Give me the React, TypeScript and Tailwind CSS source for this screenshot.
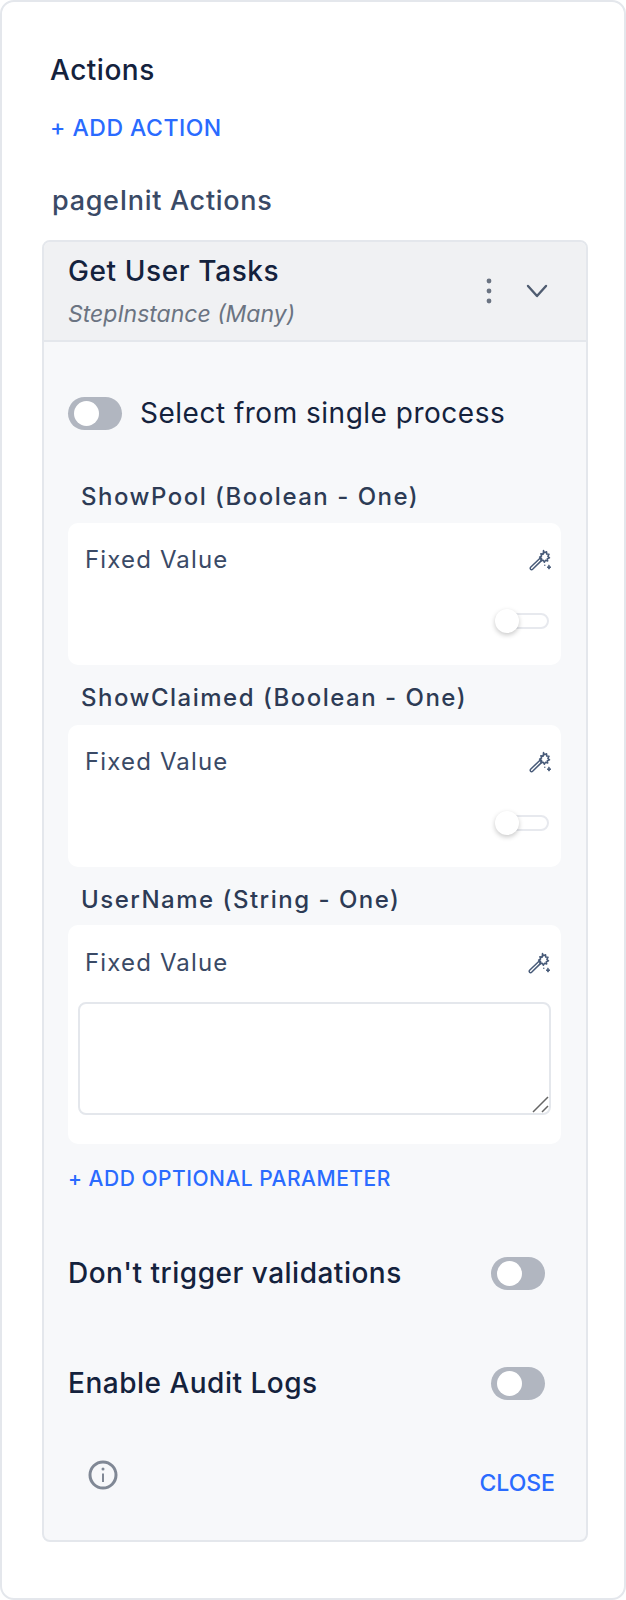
const font = { fontFamily: 'Inter, sans-serif' };

const WandIcon = () => (
  <svg width="24" height="24" viewBox="0 0 24 24" fill="none" stroke="#475a78" strokeWidth="1.5" strokeLinejoin="round" strokeLinecap="round">
    <path d="M2.6 21.2 a1.3 1.3 0 0 1 0-1.9 L12 10.2 l1.9 1.9 L4.6 21.3 a1.4 1.4 0 0 1-2 -.1z" />
    <path d="M15.5 2.5l1 2.2 2.1-1 .1 2.4 2.3.2-1.2 2 1.7 1.5-2.2.9.4 2.3-2.2-.7-1.2 2-1-2.1-2.3.5.6-2.3-2-1.2 2-1.2-.7-2.3 2.3.5z" />
    <path d="M21 17.2l.7 1.3 1.3.7-1.3.7-.7 1.3-.7-1.3-1.3-.7 1.3-.7z" fill="#475a78" strokeWidth="0.8" />
    <circle cx="16.8" cy="17.2" r=".7" fill="#475a78" stroke="none" />
  </svg>
);

const BigToggle = () => (
  <span className="flex h-[33px] w-[54px] shrink-0 items-center rounded-full bg-[#b1b6c0] pl-[6px]">
    <span className="h-[25px] w-[25px] rounded-full bg-white" />
  </span>
);

const SmallToggle = () => (
  <span className="relative block h-[24px] w-[54px]">
    <span className="absolute left-[8px] right-0 top-[4px] h-[16px] rounded-full border-2 border-[#e7e9ee] bg-white" />
    <span className="absolute left-0 top-0 h-[24px] w-[24px] rounded-full bg-white shadow-[0_2px_5px_rgba(0,0,0,0.22)]" />
  </span>
);

const FixedHeader = () => (
  <div className="flex items-center justify-between">
    <span className="text-[24px] leading-[30px] tracking-[1.15px] text-[#3a4a66]">Fixed Value</span>
    <WandIcon />
  </div>
);

const ParamLabel = ({ label }: { label: string }) => (
  <div className="pl-[13px] text-[24px] font-medium leading-[30px] tracking-[1.5px] text-[#2d3b55]">{label}</div>
);

const BoolParam = ({ label, spacing }: { label: string; spacing: string }) => (
  <div>
    <ParamLabel label={label} />
    <div className={`${spacing} h-[142px] rounded-[10px] bg-white pl-[17px] pr-[9px] pt-[22px]`}>
      <FixedHeader />
      <div className="mt-[34px] flex justify-end pr-[3px]">
        <SmallToggle />
      </div>
    </div>
  </div>
);

const ToggleRow = ({ label }: { label: string }) => (
  <div className="flex items-center justify-between pr-[16px]">
    <span className="text-[28px] font-medium leading-[34px] tracking-[0.5px] text-[#14223d]">{label}</span>
    <BigToggle />
  </div>
);

export default function App() {
  return (
    <div style={font} className="h-[1600px] w-[626px] rounded-[14px] border-2 border-[#e4e7ec] bg-white pl-[40px] pr-[36px] pt-[50px]">
      <h2 className="pl-[8px] text-[28px] font-medium leading-[36px] tracking-[0.5px] text-[#14223d]">Actions</h2>
      <div className="mt-[25px] pl-[8px] text-[23px] font-medium leading-[30px] tracking-[0.5px] text-[#2a6bff]">+ ADD ACTION</div>
      <div className="mt-[41px] pl-[10px] text-[27px] font-medium leading-[34px] tracking-[0.7px] text-[#3a4a66]">pageInit Actions</div>

      <div className="mt-[22px] overflow-hidden rounded-[8px] border-2 border-[#e4e7ec] bg-[#f7f8fa]">
        <div className="flex h-[100px] items-center justify-between border-b-2 border-[#e4e7ec] bg-[#f0f1f3] pl-[24px] pr-[38px]">
          <div>
            <div className="text-[28px] font-medium leading-[34px] tracking-[0.6px] text-[#14223d]">Get User Tasks</div>
            <div className="mt-[12px] text-[23px] italic leading-[28px] text-[#6b7482]">StepInstance (Many)</div>
          </div>
          <div className="flex items-center gap-[34px]">
            <svg width="6" height="26" viewBox="0 0 6 26" fill="#6b7482">
              <circle cx="3" cy="3" r="2.4" />
              <circle cx="3" cy="13" r="2.4" />
              <circle cx="3" cy="23" r="2.4" />
            </svg>
            <svg width="22" height="14" viewBox="0 0 22 14" fill="none" stroke="#4f5c70" strokeWidth="2.4" strokeLinecap="round" strokeLinejoin="round">
              <path d="M2 2l9 10 9-10" />
            </svg>
          </div>
        </div>

        <div className="pl-[24px] pr-[25px]">
          <div className="mt-[54px] flex items-center gap-[18px]">
            <BigToggle />
            <span className="text-[28px] leading-[34px] tracking-[0.5px] text-[#14223d]">Select from single process</span>
          </div>

          <div className="mt-[52px] flex flex-col gap-[18px]">
            <BoolParam label="ShowPool (Boolean - One)" spacing="mt-[11px]" />
            <BoolParam label="ShowClaimed (Boolean - One)" spacing="mt-[12px]" />
            <div>
              <ParamLabel label="UserName (String - One)" />
              <div className="mt-[10px] h-[219px] rounded-[10px] bg-white pl-[10px] pr-[10px] pt-[23px]">
                <div className="pl-[7px]">
                  <FixedHeader />
                </div>
                <div className="relative mt-[24px]">
                  <textarea className="block h-[113px] w-full resize-none rounded-[8px] border-2 border-[#e4e7ec] bg-white" />
                  <svg className="absolute bottom-[2px] right-[2px]" width="18" height="18" viewBox="0 0 18 18" fill="none" stroke="#666" strokeWidth="1.5">
                    <path d="M2 17L17 2M11 17l6-6" />
                  </svg>
                </div>
              </div>
            </div>
          </div>

          <div className="mt-[21px] text-[21px] font-medium leading-[28px] tracking-[0.5px] text-[#2a6bff]">+ ADD OPTIONAL PARAMETER</div>

          <div className="mt-[63px] flex flex-col gap-[76px]">
            <ToggleRow label="Don't trigger validations" />
            <ToggleRow label="Enable Audit Logs" />
          </div>

          <div className="mt-[59px] flex h-[81px] items-start justify-between pl-[20px] pr-[6px]">
            <svg className="mt-[1px]" width="30" height="30" viewBox="0 0 30 30" fill="none" stroke="#808895" strokeWidth="3">
              <circle cx="15" cy="15" r="13" />
              <path d="M15 13.5V22" strokeWidth="2" />
              <circle cx="15" cy="9" r="1.5" fill="#808895" stroke="none" />
            </svg>
            <span className="mt-[10px] text-[23px] font-medium leading-[28px] text-[#2a6bff]">CLOSE</span>
          </div>
        </div>
      </div>
    </div>
  );
}
